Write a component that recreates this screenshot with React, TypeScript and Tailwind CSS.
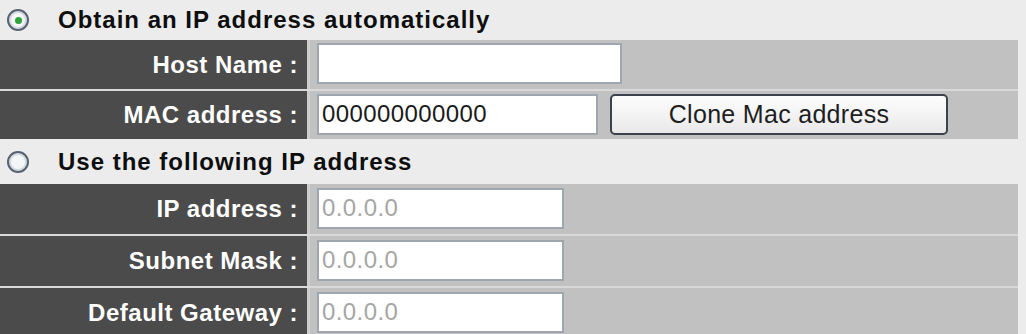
import type { ReactNode } from 'react';

const font = "font-['Liberation_Sans',Arial,sans-serif]";

function Radio({ checked }: { checked?: boolean }) {
	return (
		<span className="flex h-[22px] w-[22px] items-center justify-center rounded-full border-[2px] border-[#566270] bg-[#f4f6f8] shadow-[inset_0_0_0_2px_#d3dae1]">
			{checked && <span className="h-[7px] w-[7px] rounded-full bg-[#2fa23a]" />}
		</span>
	);
}

function Heading({ checked, children, className }: { checked?: boolean; children: ReactNode; className: string }) {
	return (
		<div className={`flex items-center ${className}`}>
			<div className="flex w-[58px] justify-center pr-[22px]">
				<Radio checked={checked} />
			</div>
			<span className="text-[24px] font-bold tracking-[1px] text-[#0e0e0e]">{children}</span>
		</div>
	);
}

function Row({ label, children, className }: { label: string; children: ReactNode; className: string }) {
	return (
		<div className={`flex w-[1018px] ${className}`}>
			<div className="flex w-[307px] items-center justify-end bg-[#4b4b4b] pr-[9px] text-[24px] font-bold tracking-[0.5px] text-white">
				{label}
			</div>
			<div className="w-[3px] bg-[#cdcdcd]" />
			<div className="flex flex-1 items-center gap-[12px] bg-[#c1c1c1] pl-[7px] pb-[2px]">{children}</div>
		</div>
	);
}

function Field({ value, width, dim }: { value?: string; width: string; dim?: boolean }) {
	return (
		<div
			className={`flex h-[41px] ${width} items-center border-[2px] border-[#9ea7b0] bg-white pl-[3px] text-[24px] tracking-[0.4px] ${
				dim ? 'text-[#a6a6a6]' : 'text-[#1a1a1a]'
			}`}
		>
			{value}
		</div>
	);
}

export default function App() {
	return (
		<div className={`h-[334px] w-[1026px] overflow-hidden bg-[#ececec] ${font}`}>
			<Heading checked className="h-[40px]">
				Obtain an IP address automatically
			</Heading>
			<div className="flex w-[1018px] flex-col gap-[2px] bg-[#d9d9d9]">
				<Row label="Host Name :" className="h-[49px]">
					<Field width="w-[305px]" />
				</Row>
				<Row label="MAC address :" className="h-[48px]">
					<Field width="w-[281px]" value="000000000000" />
					<button className="h-[41px] w-[338px] rounded-[5px] border-[2px] border-[#3b424b] bg-gradient-to-b from-[#fdfdfd] to-[#e9e9e9] text-[25px] tracking-[0.3px] text-[#1e1e1e]">
						Clone Mac address
					</button>
				</Row>
			</div>
			<Heading className="h-[45px]">Use the following IP address</Heading>
			<div className="flex w-[1018px] flex-col gap-[2px] bg-[#d9d9d9]">
				<Row label="IP address :" className="h-[50px]">
					<Field width="w-[247px]" value="0.0.0.0" dim />
				</Row>
				<Row label="Subnet Mask :" className="h-[50px]">
					<Field width="w-[247px]" value="0.0.0.0" dim />
				</Row>
				<Row label="Default Gateway :" className="h-[50px]">
					<Field width="w-[247px]" value="0.0.0.0" dim />
				</Row>
			</div>
		</div>
	);
}
